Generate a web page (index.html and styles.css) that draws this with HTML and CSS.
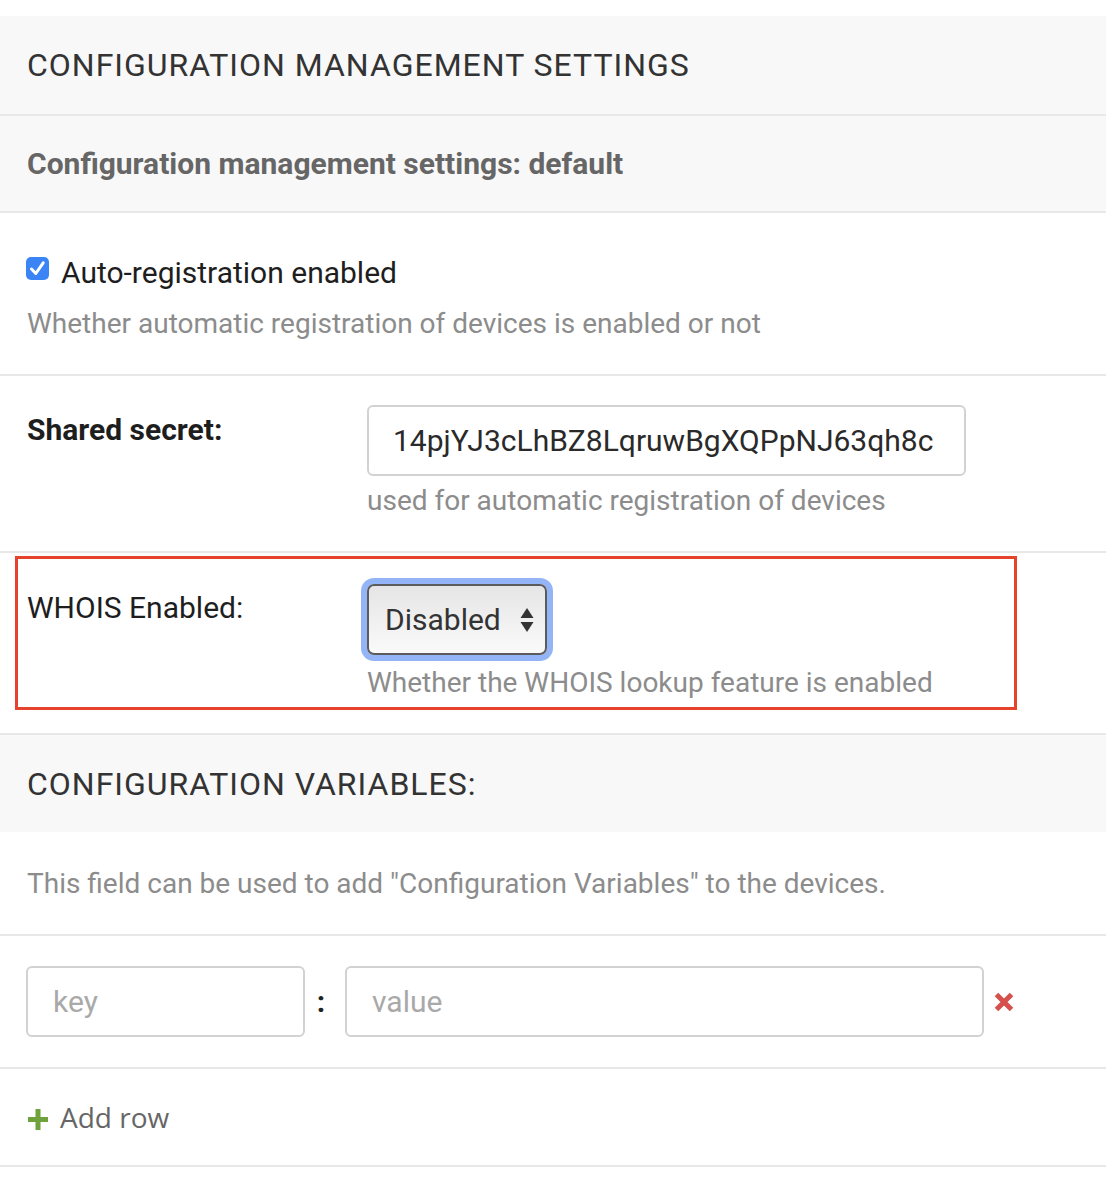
FILE: index.html
```html
<!DOCTYPE html>
<html>
<head>
<meta charset="utf-8">
<link rel="stylesheet" href="styles.css">
</head>
<body>
<div class="page">
  <h2 class="module-title">CONFIGURATION MANAGEMENT SETTINGS</h2>
  <h3 class="sub-title">Configuration management settings: default</h3>

  <div class="row row-check">
    <div class="check-line">
      <span class="checkbox">
        <svg viewBox="0 0 23 23" width="23" height="23"><rect x="0" y="0" width="23" height="23" rx="5" fill="#3b84f6"/><path d="M5.5 12 L9.8 16.5 L17.2 5.8" fill="none" stroke="#fff" stroke-width="3" stroke-linecap="round" stroke-linejoin="round"/></svg>
      </span>
      <span class="check-label">Auto-registration enabled</span>
    </div>
    <div class="help help-check">Whether automatic registration of devices is enabled or not</div>
  </div>

  <div class="row row-field">
    <div class="label bold">Shared secret:</div>
    <div class="field">
      <div class="text-input secret">14pjYJ3cLhBZ8LqruwBgXQPpNJ63qh8c</div>
      <div class="help">used for automatic registration of devices</div>
    </div>
  </div>

  <div class="row row-whois">
    <div class="highlight">
      <div class="label">WHOIS Enabled:</div>
      <div class="field">
        <div class="select">
          <span>Disabled</span>
          <svg class="arrows" viewBox="0 0 16 28" width="16" height="28"><path d="M8 2 L14.5 12 L1.5 12 Z" fill="#333"/><path d="M1.5 16 L14.5 16 L8 26 Z" fill="#333"/></svg>
        </div>
        <div class="help">Whether the WHOIS lookup feature is enabled</div>
      </div>
    </div>
  </div>

  <h2 class="module-title vars-title">CONFIGURATION VARIABLES:</h2>
  <div class="row row-desc">
    <div class="help">This field can be used to add "Configuration Variables" to the devices.</div>
  </div>

  <div class="row row-kv">
    <div class="text-input key placeholder">key</div>
    <span class="colon">:</span>
    <div class="text-input value placeholder">value</div>
    <svg class="delete" viewBox="0 0 22 20" width="22" height="20"><path d="M3.5 2.5 L18.5 17.5 M18.5 2.5 L3.5 17.5" stroke="#d6504c" stroke-width="5"/></svg>
  </div>

  <div class="row row-add">
    <svg class="plus" viewBox="0 0 20 21" width="20" height="21"><path d="M7.5 0 H12.5 V8 H20 V13 H12.5 V21 H7.5 V13 H0 V8 H7.5 Z" fill="#6fa23a"/></svg>
    <span class="add-text">Add row</span>
  </div>
</div>
</body>
</html>
```

FILE: styles.css
```css
html, body {
  margin: 0;
  padding: 0;
  background: #fff;
}
body {
  font-family: Roboto, "Liberation Sans", sans-serif;
  color: #222;
}
.page {
  padding-top: 16px;
  width: 1106px;
}
.module-title {
  margin: 0;
  background: #f8f8f8;
  height: 100px;
  box-sizing: border-box;
  padding-left: 27px;
  display: flex;
  align-items: center;
  font-size: 32px;
  font-weight: 400;
  letter-spacing: 1px;
  color: #333;
  border-bottom: 2px solid #e8e8e8;
}
.sub-title {
  margin: 0;
  background: #f8f8f8;
  height: 97px;
  box-sizing: border-box;
  padding-left: 27px;
  display: flex;
  align-items: center;
  font-size: 30px;
  font-weight: 700;
  color: #666;
  border-bottom: 2px solid #e8e8e8;
}
.row {
  border-bottom: 2px solid #e8e8e8;
  box-sizing: border-box;
}
.help {
  font-size: 28px;
  line-height: 33px;
  color: #8c8c8c;
}
.row-check {
  height: 163px;
  padding: 42px 0 0 26px;
}
.check-line {
  display: flex;
  align-items: flex-start;
  gap: 12px;
}
.checkbox {
  display: flex;
  width: 23px;
  height: 23px;
  margin-top: 2px;
}
.check-label {
  font-size: 30px;
  line-height: 35px;
  color: #1e1e1e;
}
.help-check {
  margin-top: 17px;
  padding-left: 1px;
}
.row-field {
  height: 177px;
  display: flex;
  padding: 29px 0 0 27px;
}
.label {
  width: 340px;
  font-size: 30px;
  line-height: 35px;
  color: #1e1e1e;
  padding-top: 7px;
  flex: none;
}
.bold {
  font-weight: 700;
}
.field {
  display: flex;
  flex-direction: column;
}
.text-input {
  box-sizing: border-box;
  height: 71px;
  border: 2px solid #d2d2d2;
  border-radius: 6px;
  font-size: 30px;
  color: #333;
  display: flex;
  align-items: center;
}
.secret {
  width: 599px;
  padding-left: 24px;
  color: #2a2a2a;
}
.row-field .help {
  margin-top: 8px;
}
.row-whois {
  height: 182px;
  padding: 3px 0 0 15px;
}
.highlight {
  width: 1002px;
  height: 154px;
  box-sizing: border-box;
  border: 3px solid #e5432c;
  display: flex;
  padding: 25px 0 0 9px;
}
.highlight .label {
  font-weight: 400;
  padding-top: 6px;
}
.select {
  box-sizing: border-box;
  width: 180px;
  height: 71px;
  border: 2px solid #5b5b5b;
  border-radius: 7px;
  background: linear-gradient(#e5e5e5, #fafafa);
  box-shadow: 0 0 0 6px #93b4f6;
  display: flex;
  align-items: center;
  justify-content: space-between;
  padding: 0 10px 0 16px;
  font-size: 30px;
  color: #333;
}
.arrows {
  width: 16px;
  height: 28px;
}
.highlight .help {
  margin-top: 11px;
}
.vars-title {
  border-bottom: none;
  height: 97px;
}
.row-desc {
  height: 104px;
  display: flex;
  align-items: center;
  padding-left: 27px;
}
.row-kv {
  height: 133px;
  display: flex;
  align-items: center;
  padding: 0 0 0 26px;
}
.placeholder {
  color: #a9a9a9;
  padding-left: 25px;
}
.key {
  width: 279px;
}
.colon {
  width: 40px;
  box-sizing: border-box;
  padding-right: 8px;
  text-align: center;
  font-size: 30px;
  color: #222;
  font-weight: 700;
}
.value {
  width: 639px;
}
.delete {
  margin-left: 9px;
}
.row-add {
  height: 98px;
  display: flex;
  align-items: center;
  padding-left: 28px;
}
.plus {
  margin-top: 4px;
}
.add-text {
  margin-left: 12px;
  font-size: 28px;
  color: #666;
  font-family: "Open Sans", "Noto Sans", sans-serif;
}
```
